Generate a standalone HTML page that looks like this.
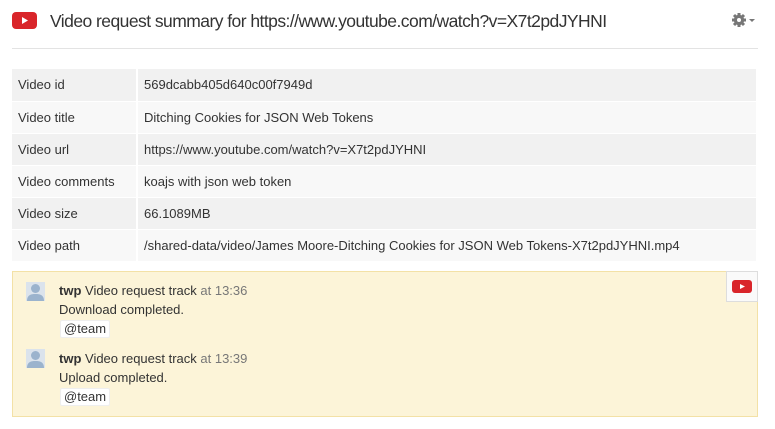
<!DOCTYPE html>
<html><head><style>
body{margin:0;width:775px;height:429px;background:#fff;font-family:"Liberation Sans",Arial,sans-serif;color:#333;position:relative;overflow:hidden}
.yt{position:absolute;display:block}
h1{position:absolute;left:50px;top:9px;margin:0;font-weight:normal;font-size:17.5px;letter-spacing:-0.55px;color:#333;line-height:24px}
.hr{position:absolute;left:12px;top:48px;width:746px;height:1px;background:#e3e3e3}
table{position:absolute;left:12px;top:69px;width:746px;border-collapse:collapse;font-size:13px}
td{height:32px;padding:0 6px;border-right:2px solid #fff;border-bottom:1px solid #fff;box-sizing:border-box}
td:first-child{width:125px}
tr:nth-child(odd) td{background:#f1f1f1}
tr:nth-child(even) td{background:#f8f8f8}
.box{position:absolute;left:12px;top:271px;width:744px;height:144px;background:#fcf4d8;border:1px solid #f3e1a6}
.ytb{position:absolute;right:-1px;top:-1px;width:30px;height:29px;background:#fafafa;border:1px solid #ddd}
.msg{position:absolute;left:46px;font-size:13px;line-height:19px}
.av{position:absolute;left:13px;width:19px;height:19px}
.tag{display:inline-block;background:#fff;border:1px solid #eee;border-radius:2px;padding:0 3px;line-height:16px;margin-left:1px}
.gray{color:#777}
</style></head><body>
<svg class="yt" style="left:12px;top:12px" width="25" height="17" viewBox="0 0 25 17"><rect width="25" height="17" rx="4" fill="#d9252a"/><path d="M10 5l6 3.5-6 3.5z" fill="#fff"/></svg>
<h1>Video request summary for https://www.youtube.com/watch?v=X7t2pdJYHNI</h1>
<svg style="position:absolute;left:731px;top:12px" width="28" height="16" viewBox="0 0 28 16"><g fill="#777"><circle cx="8" cy="8" r="5.2"/><g stroke="#777" stroke-width="3"><path d="M8 1v14M1 8h14M3 3l10 10M13 3L3 13"/></g></g><circle cx="8" cy="8" r="2" fill="#fff"/><path d="M18 7h6l-3 3z" fill="#777"/></svg>
<div class="hr"></div>
<table>
<tr><td>Video id</td><td>569dcabb405d640c00f7949d</td></tr>
<tr><td>Video title</td><td>Ditching Cookies for JSON Web Tokens</td></tr>
<tr><td>Video url</td><td>https://www.youtube.com/watch?v=X7t2pdJYHNI</td></tr>
<tr><td>Video comments</td><td>koajs with json web token</td></tr>
<tr><td>Video size</td><td>66.1089MB</td></tr>
<tr><td>Video path</td><td>/shared-data/video/James Moore-Ditching Cookies for JSON Web Tokens-X7t2pdJYHNI.mp4</td></tr>
</table>
<div class="box">
<div class="ytb"><svg style="position:absolute;left:5px;top:8px" width="20" height="13" viewBox="0 0 20 13"><rect width="20" height="13" rx="3" fill="#d9252a"/><path d="M8 4l5 2.5-5 2.5z" fill="#fff"/></svg></div>
<svg class="av" style="top:10px" viewBox="0 0 19 19"><rect width="19" height="19" fill="#dbe3ec"/><circle cx="9.5" cy="6.5" r="4.5" fill="#9bb3cd"/><path d="M1 19c0-6 4-7 8.5-7s8.5 1 8.5 7z" fill="#9bb3cd"/></svg>
<div class="msg" style="top:9px"><b>twp</b> Video request track <span class="gray">at 13:36</span><br>Download completed.<br><span class="tag">@team</span></div>
<svg class="av" style="top:77px" viewBox="0 0 19 19"><rect width="19" height="19" fill="#dbe3ec"/><circle cx="9.5" cy="6.5" r="4.5" fill="#9bb3cd"/><path d="M1 19c0-6 4-7 8.5-7s8.5 1 8.5 7z" fill="#9bb3cd"/></svg>
<div class="msg" style="top:77px"><b>twp</b> Video request track <span class="gray">at 13:39</span><br>Upload completed.<br><span class="tag">@team</span></div>
</div>
</body></html>
